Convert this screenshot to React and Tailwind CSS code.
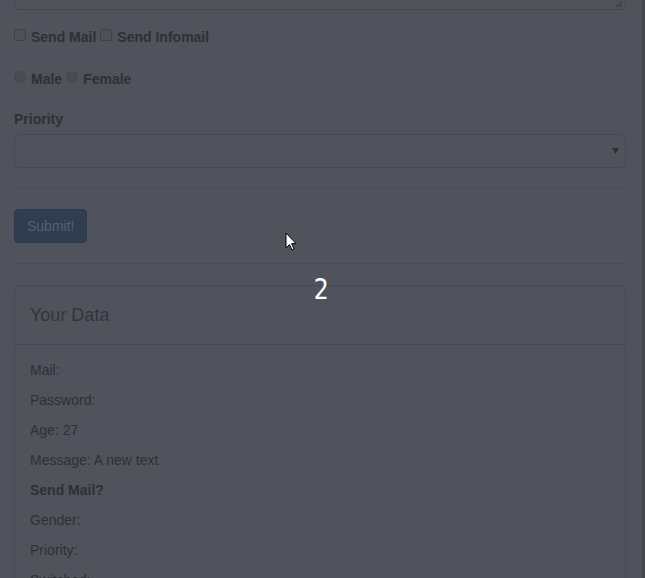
const rows = [
  { label: 'Mail:' },
  { label: 'Password:' },
  { label: 'Age: 27' },
  { label: 'Message: A new text' },
  { label: 'Send Mail?', bold: true },
  { label: 'Gender:' },
  { label: 'Priority:' },
  { label: 'Switched:' },
];

function Checkbox() {
  return <span className="inline-block w-[12px] h-[12px] mt-[2px] rounded-[2px] border border-[#3f4249] bg-[#4e5159] shrink-0" />;
}

function Radio() {
  return <span className="inline-block w-[12px] h-[12px] mt-[2px] rounded-full border border-[#44474e] bg-[#484b53] shrink-0" />;
}

export default function App() {
  return (
    <div className="relative w-[645px] h-[578px] overflow-hidden bg-[#50535c] text-[#2e3036] text-[14px] leading-[20px] font-['Liberation_Sans',Arial,sans-serif] flex items-start">
      <div className="flex-1 pl-[14px] flex flex-col">
        {/* textarea bottom */}
        <div className="relative h-[10px] border-x border-b border-[#45484f] rounded-b-[4px]">
          <svg className="absolute right-[2px] bottom-[1px]" width="8" height="8" viewBox="0 0 8 8">
            <path d="M7 1L1 7M7 4L4 7" stroke="#2e3036" strokeWidth="1" />
          </svg>
        </div>

        <div className="mt-[17px] flex items-start font-bold">
          <Checkbox />
          <span className="ml-[5px]">Send Mail</span>
          <span className="ml-[4px] flex"><Checkbox /></span>
          <span className="ml-[5px]">Send Infomail</span>
        </div>

        <div className="mt-[22px] flex items-start font-bold">
          <Radio />
          <span className="ml-[5px]">Male</span>
          <span className="ml-[4px] flex"><Radio /></span>
          <span className="ml-[5px]">Female</span>
        </div>

        <div className="mt-[20px] font-bold">Priority</div>
        <div className="mt-[5px] h-[34px] border border-[#474a52] rounded-[4px] flex items-center justify-end pr-[6px]">
          <svg width="7" height="6" viewBox="0 0 7 6">
            <path d="M0 0H7L3.5 6Z" fill="#2e3036" />
          </svg>
        </div>

        <div className="mt-[20px] border-t border-[#4a4d55]" />

        <div className="mt-[20px]">
          <button className="h-[34px] px-[12px] rounded-[4px] bg-[#2f3d51] border border-[#2c394b] text-[#566071]">Submit!</button>
        </div>

        <div className="mt-[20px] border-t border-[#4a4d55]" />

        <div className="mt-[21px] border border-[#474a52] rounded-[4px] flex flex-col">
          <div className="h-[59px] px-[15px] flex items-center border-b border-[#474a52] text-[18px] text-[#33353c]">
            Your Data
          </div>
          <div className="px-[15px] pt-[15px] flex flex-col gap-[10px]">
            {rows.map((r) => (
              <p key={r.label} className={r.bold ? 'font-bold' : ''}>{r.label}</p>
            ))}
          </div>
        </div>
      </div>
      <div className="w-[19px] h-[578px] flex justify-end">
        <div className="w-[3px] bg-[#45474e]" />
      </div>

      <div className="absolute left-[313px] top-[271px] text-white text-[29px] leading-[36px] font-['DejaVu_Sans_Condensed','DejaVu_Sans',sans-serif] scale-x-90">
        2
      </div>

      <svg className="absolute left-[285px] top-[232px]" width="12" height="20" viewBox="0 0 12 20">
        <path d="M1 1V16L4.5 12.5L7 18L9 17L6.6 11.6H11Z" fill="#fff" stroke="#000" strokeWidth="1" strokeLinejoin="round" />
      </svg>
    </div>
  );
}
